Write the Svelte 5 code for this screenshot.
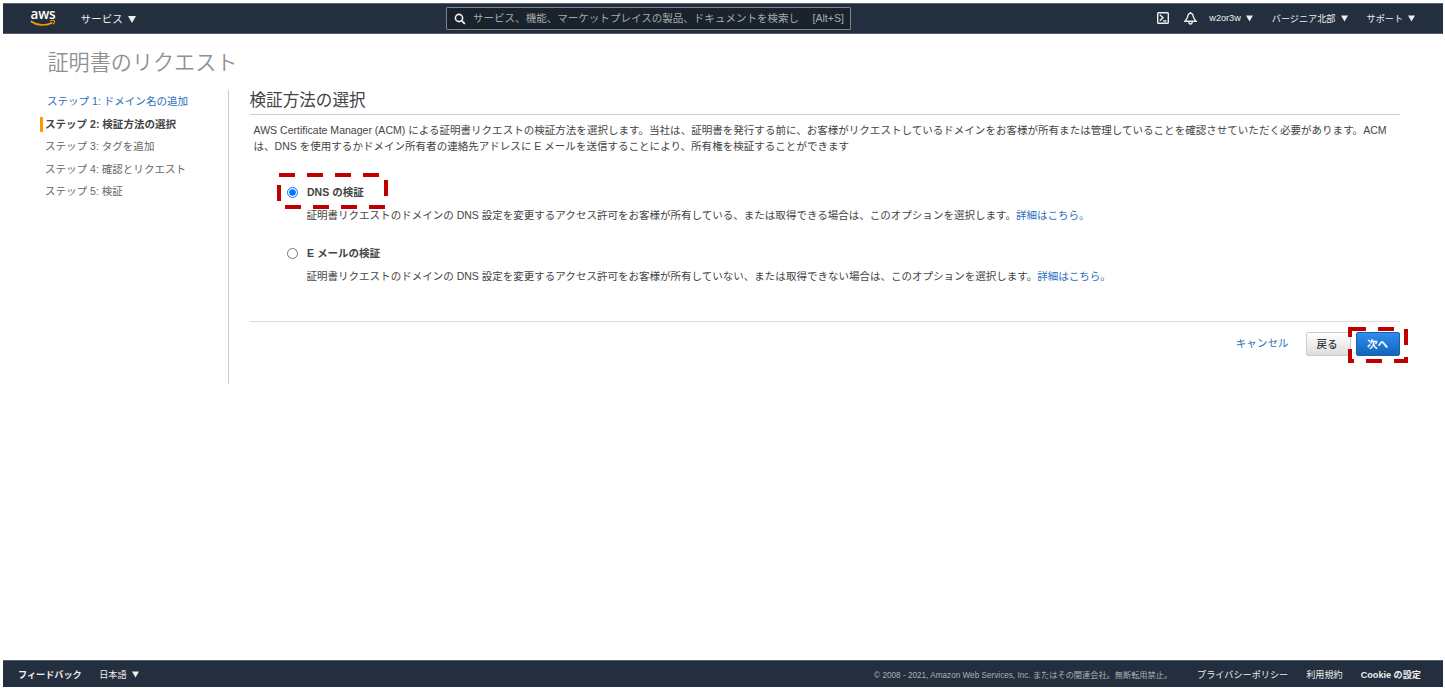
<script lang="ts">
  interface Step {
    id: number;
    label: string;
  }

  interface Method {
    id: string;
    title: string;
    description: string;
  }

  const steps: Step[] = [
    { id: 1, label: 'ドメイン名の追加' },
    { id: 2, label: '検証方法の選択' },
    { id: 3, label: 'タグを追加' },
    { id: 4, label: '確認とリクエスト' },
    { id: 5, label: '検証' },
  ];

  const methods: Method[] = [
    {
      id: 'dns',
      title: 'DNS の検証',
      description:
        '証明書リクエストのドメインの DNS 設定を変更するアクセス許可をお客様が所有している、または取得できる場合は、このオプションを選択します。',
    },
    {
      id: 'email',
      title: 'E メールの検証',
      description:
        '証明書リクエストのドメインの DNS 設定を変更するアクセス許可をお客様が所有していない、または取得できない場合は、このオプションを選択します。',
    },
  ];

  let currentStep = $state(2);
  let selected = $state('dns');
</script>

{#snippet caret()}
  <svg class="caret" viewBox="0 0 8 7"><path d="M0 0h8L4 7z" fill="currentColor" /></svg>
{/snippet}

<div class="page">
  <header class="topbar">
    <div class="logo">
      <span>aws</span>
      <svg viewBox="0 0 26 8">
        <path d="M.8 2.2C7 6.6 15.5 7.2 22.4 3.8" fill="none" stroke="#f90" stroke-width="1.7" />
        <path d="M20 2c2-.8 4-.7 4.5-.2.4.7-.2 2.2-1.3 3.6" fill="none" stroke="#f90" stroke-width="1.1" />
      </svg>
    </div>
    <div class="services">サービス{@render caret()}</div>

    <div class="search">
      <svg viewBox="0 0 12 12">
        <circle cx="5" cy="5" r="3.6" fill="none" stroke="#eee" stroke-width="1.6" />
        <path d="M7.6 7.6l3.2 3.2" stroke="#eee" stroke-width="1.9" />
      </svg>
      <span class="placeholder">サービス、機能、マーケットプレイスの製品、ドキュメントを検索し</span>
      <span class="shortcut">[Alt+S]</span>
    </div>

    <nav class="account">
      <svg class="shell" viewBox="0 0 12 12" fill="none" stroke="#eee" stroke-width="1.4">
        <rect x=".7" y=".7" width="10.6" height="10.6" rx=".8" />
        <path d="M2.8 2.8L6 5.8 2.8 8.8M6.2 9h3.2" />
      </svg>
      <svg class="bell" viewBox="0 0 12 12" fill="none" stroke="#eee" stroke-width="1.3">
        <path d="M6 .7L4 2.2C3.6 5 2.6 6.6.9 8.5h10.2C9.4 6.6 8.4 5 8 2.2z" />
        <path d="M4.4 9c.2 2.8 3 2.8 3.2 0" />
      </svg>
      <span class="menu user">w2or3w{@render caret()}</span>
      <span class="menu region">バージニア北部{@render caret()}</span>
      <span class="menu">サポート{@render caret()}</span>
    </nav>
  </header>

  <main>
    <h1>証明書のリクエスト</h1>

    <div class="columns">
      <ul class="steps">
        {#each steps as step (step.id)}
          <li class:done={step.id < currentStep} class:current={step.id === currentStep}>
            ステップ {step.id}: {step.label}
          </li>
        {/each}
      </ul>

      <section class="content">
        <h2>検証方法の選択</h2>
        <p class="intro">
          AWS Certificate Manager (ACM) による証明書リクエストの検証方法を選択します。当社は、証明書を発行する前に、お客様がリクエストしているドメインをお客様が所有または管理していることを確認させていただく必要があります。ACM<br />は、DNS を使用するかドメイン所有者の連絡先アドレスに E メールを送信することにより、所有権を検証することができます
        </p>

        <div class="methods">
          {#each methods as method (method.id)}
            <label class="method">
              <input type="radio" name="method" value={method.id} bind:group={selected} />
              <span class="method-title">{method.title}</span>
              <span class="method-text">{method.description}<a href="#more">詳細はこちら。</a></span>
              {#if method.id === 'dns'}
                <svg class="mark mark-method" viewBox="0 0 112 36">
                  <path d="M2 0h16v4H2zM30 0h16v4H30zM58 0h16v4H58zM86 0h16v4H86zM107 7h4v16h-4zM8 32h16v4H8zM36 32h16v4H36zM64 32h16v4H64zM92 32h16v4H92zM0 12h4v16H0z" />
                </svg>
              {/if}
            </label>
          {/each}
        </div>

        <div class="actions">
          <a href="#cancel">キャンセル</a>
          <button class="btn">戻る</button>
          <button class="btn btn-primary">次へ</button>
          <svg class="mark mark-next" viewBox="0 0 60 36">
            <path d="M0 0h18v4H4v6H0zM30 0h16v4H30zM56 2h4v16h-4zM56 30h4v6H46v-4h10zM18 32h16v4H18zM0 22h4v10h2v4H0z" />
          </svg>
        </div>
      </section>
    </div>
  </main>

  <footer>
    <b>フィードバック</b>
    <span class="language">日本語{@render caret()}</span>
    <span class="copyright">© 2008 - 2021, Amazon Web Services, Inc. またはその関連会社。無断転用禁止。</span>
    <span class="privacy">プライバシーポリシー</span>
    <span class="terms">利用規約</span>
    <b>Cookie の設定</b>
  </footer>
</div>

<style>
  :global(body) {
    background: #fff;
  }

  .page {
    box-sizing: border-box;
    width: 1445px;
    height: 690px;
    padding: 3px 2px 3px 3px;
    display: flex;
    flex-direction: column;
    overflow: hidden;
    font-family: 'Liberation Sans', 'Noto Sans CJK JP', sans-serif;
    font-size: 10.54px;
    color: #444;
    white-space: nowrap;
  }

  a {
    color: #2a6ebb;
    text-decoration: none;
  }

  .caret {
    width: 8px;
    height: 7px;
  }

  /* Top bar */
  .topbar {
    box-sizing: border-box;
    height: 31px;
    flex: none;
    display: flex;
    align-items: center;
    padding-bottom: 1px;
    background: #232f3e;
    border-top: 1px solid #56606c;
    border-bottom: 1px solid #56606c;
    color: #eee;
  }

  .logo {
    width: 26px;
    margin-left: 27px;
    display: flex;
    flex-direction: column;
    align-items: center;
  }

  .logo span {
    font: 600 13.5px/10px 'Open Sans', sans-serif;
    letter-spacing: -0.2px;
    color: #fff;
  }

  .logo svg {
    width: 26px;
    height: 8px;
  }

  .services {
    width: 60px;
    margin-left: 24.5px;
    font-size: 10.6px;
  }

  .services .caret {
    margin-left: 5px;
  }

  .search {
    box-sizing: border-box;
    width: 405px;
    height: 23px;
    margin: 1px 0 0 305.5px;
    padding: 0 6px 2px 7px;
    display: flex;
    align-items: center;
    background: #1a222c;
    border: 1px solid #7b8684;
    border-radius: 1px;
    color: #a3acac;
  }

  .search svg {
    width: 12px;
    height: 12px;
    margin: 2px 7px 0 0;
  }

  .shortcut {
    margin-left: auto;
    font-size: 10.6px;
  }

  .account {
    margin-left: auto;
    padding-right: 28px;
    display: flex;
    align-items: center;
    font-size: 9.15px;
  }

  .shell {
    width: 12px;
    height: 12px;
    margin-right: 15px;
  }

  .bell {
    width: 13px;
    height: 13px;
    margin-right: 12px;
  }

  .menu {
    display: flex;
    align-items: center;
    gap: 5px;
  }

  .account .caret {
    width: 7px;
    height: 7px;
  }

  .user {
    margin-right: 19px;
  }

  .region {
    margin-right: 19px;
  }

  /* Wizard */
  main {
    flex: 1;
  }

  h1 {
    margin: 14px 0 0 44.5px;
    font-size: 21.1px;
    line-height: 30px;
    font-weight: 350;
    color: #909090;
  }

  .columns {
    display: flex;
    margin-top: 12px;
  }

  .steps {
    box-sizing: border-box;
    width: 226px;
    height: 294px;
    margin: 0;
    padding: 0 0 0 37px;
    border-right: 1px solid #ccc;
    list-style: none;
    font-size: 10.54px;
    color: #666;
  }

  .steps li {
    height: 15px;
    margin-bottom: 7.5px;
    padding-left: 5px;
    line-height: 15px;
  }

  .steps .done {
    margin-top: 4px;
    padding-left: 7px;
    color: #2a6ebb;
  }

  .steps .current {
    padding-left: 2px;
    border-left: 3px solid #f90;
    font-weight: bold;
    color: #444;
  }

  .content {
    width: 1150px;
    margin-left: 20.5px;
  }

  h2 {
    margin: 0;
    height: 24px;
    line-height: 21px;
    border-bottom: 1px solid #ccc;
    font-size: 16.6px;
    font-weight: normal;
  }

  .intro {
    margin: 7px 0 0 4px;
    line-height: 16px;
  }

  .methods {
    box-sizing: border-box;
    height: 168px;
    padding: 28px 0 0 37px;
    border-bottom: 1px solid #ddd;
  }

  .method {
    position: relative;
    display: grid;
    grid-template-columns: 20px auto;
    grid-template-rows: 18px 18px;
    row-gap: 5px;
    align-items: center;
    margin-bottom: 20.5px;
  }

  .method input {
    width: 11px;
    height: 11px;
    margin: 2px 0 0;
  }

  .method-title {
    padding-left: 0.5px;
    font-weight: bold;
  }

  .method-text {
    grid-column: 2;
    font-size: 10.52px;
  }

  .mark {
    position: absolute;
    fill: #c00000;
  }

  .mark-method {
    left: -9.5px;
    top: -9px;
    width: 112px;
    height: 36px;
  }

  .actions {
    position: relative;
    display: flex;
    justify-content: flex-end;
    align-items: center;
    margin-top: 10px;
  }

  .actions a {
    margin-top: -3px;
  }

  .btn {
    box-sizing: border-box;
    width: 45px;
    height: 24px;
    margin-left: 17px;
    padding: 0 2px 2px 0;
    border: 1px solid #ccc;
    border-radius: 2px;
    background: linear-gradient(#fff, #ddd);
    font-family: inherit;
    font-size: 10.6px;
    font-weight: 500;
    color: #333;
  }

  .btn-primary {
    width: 44px;
    margin-left: 5px;
    padding-right: 0;
    border-color: #1c5fab;
    background: linear-gradient(#2f8ded, #1166bb);
    font-weight: bold;
    color: #fff;
  }

  .mark-next {
    left: 1098.5px;
    top: -5px;
    width: 60px;
    height: 36px;
  }

  /* Footer */
  footer {
    box-sizing: border-box;
    height: 27px;
    flex: none;
    display: flex;
    align-items: center;
    padding: 0 22px 1px 15px;
    background: #232f3e;
    border-top: 1px solid #56606c;
    font-size: 9.15px;
    color: #eee;
  }

  .language {
    margin-left: 17.5px;
  }

  .language .caret {
    width: 7px;
    margin-left: 5px;
  }

  .copyright {
    margin-left: auto;
    font-size: 8.2px;
    color: #aab0b5;
  }

  .privacy {
    margin: 0 18px 0 25px;
  }

  .terms {
    margin-right: 18px;
  }
</style>
